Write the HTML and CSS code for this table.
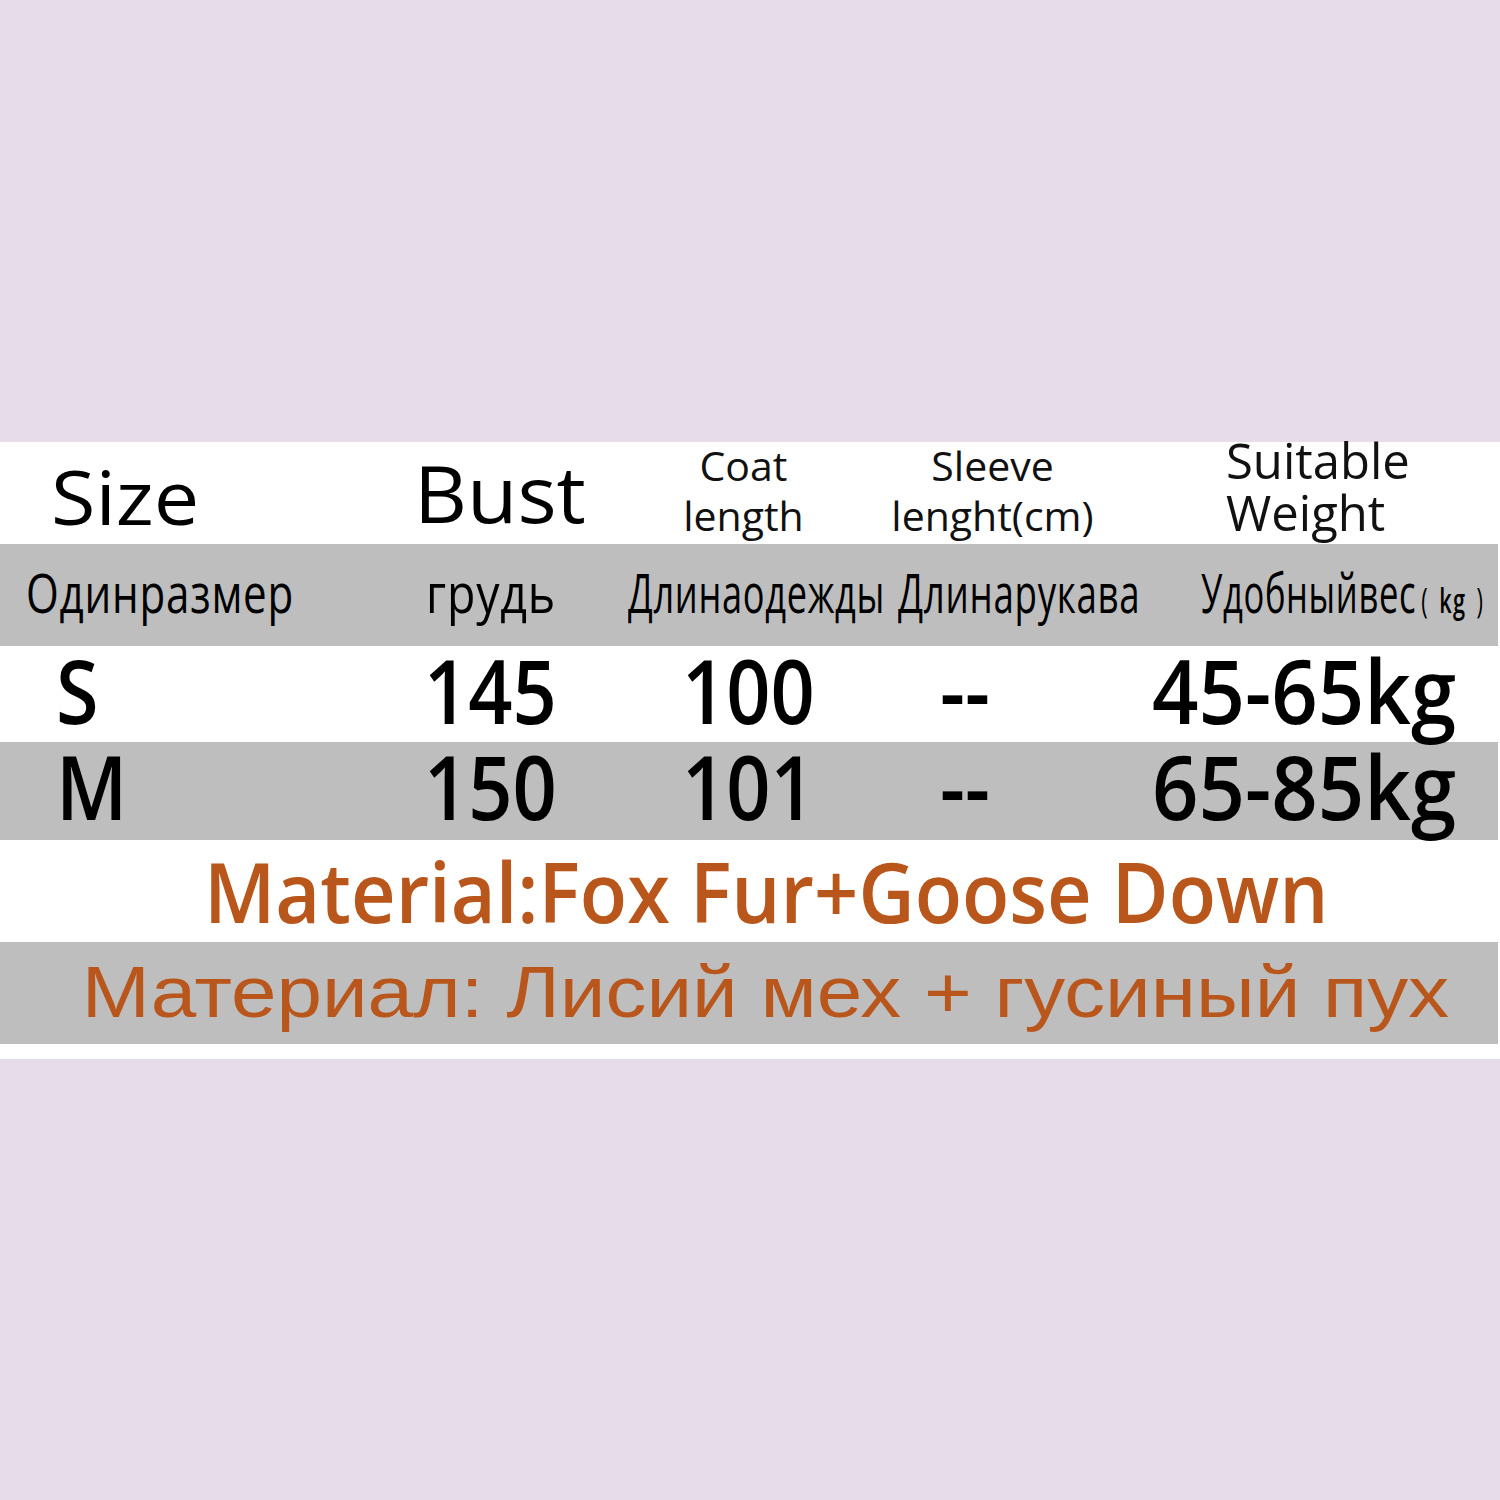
FILE: index.html
```html
<!DOCTYPE html>
<html lang="ru">
<head>
<meta charset="utf-8">
<title>Size chart</title>
<link rel="stylesheet" href="styles.css">
</head>
<body>
<div class="chart">
  <div class="row hdr">
    <div class="cell c1"><span class="big size">Size</span></div>
    <div class="cell c2"><span class="big bust">Bust</span></div>
    <div class="cell c3"><span class="two">Coat<br>length</span></div>
    <div class="cell c4"><span class="two">Sleeve<br>lenght(cm)</span></div>
    <div class="cell c5"><span class="two wt">Suitable<br>Weight</span></div>
  </div>
  <div class="row ru gray">
    <div class="cell c1"><span class="cond k1">Одинразмер</span></div>
    <div class="cell c2"><span class="cond k2">грудь</span></div>
    <div class="cell c3"><span class="cond k3">Длинаодежды</span></div>
    <div class="cell c4"><span class="cond k4">Длинарукава</span></div>
    <div class="cell c5"><span class="cond k5">Удобныйвес<small>(<b>kg</b>)</small></span></div>
  </div>
  <div class="row data">
    <div class="cell c1"><span class="num">S</span></div>
    <div class="cell c2"><span class="num">145</span></div>
    <div class="cell c3"><span class="num">100</span></div>
    <div class="cell c4"><span class="num">--</span></div>
    <div class="cell c5"><span class="num">45-65kg</span></div>
  </div>
  <div class="row data gray">
    <div class="cell c1"><span class="num">M</span></div>
    <div class="cell c2"><span class="num">150</span></div>
    <div class="cell c3"><span class="num">101</span></div>
    <div class="cell c4"><span class="num">--</span></div>
    <div class="cell c5"><span class="num">65-85kg</span></div>
  </div>
  <div class="row mat">
    <span class="mat-en">Material:Fox Fur+Goose Down</span>
  </div>
  <div class="row mat gray">
    <span class="mat-ru">Материал: Лисий мех + гусиный пух</span>
  </div>
  <div class="tail"></div>
</div>
</body>
</html>
```
FILE: styles.css
```css
html, body {
  margin: 0;
  padding: 0;
}
body {
  background: #e6dcea;
  min-height: 1500px;
  display: flex;
  flex-direction: column;
  justify-content: center;
  font-family: "Open Sans", "Noto Sans", sans-serif;
  color: #000;
}
.chart {
  background: #fff;
  width: 1500px;
  display: flex;
  flex-direction: column;
  overflow-x: clip;
}
.row {
  display: grid;
  grid-template-columns: 410px 210px 255px 265px minmax(0, 1fr);
  align-items: start;
}
.gray {
  background: #bebebe;
  margin-right: 2px;
}
.cell {
  white-space: nowrap;
  min-width: 0;
}

/* header row */
.hdr {
  height: 102px;
  position: relative;
  z-index: 0;
}
.big {
  display: block;
  line-height: 1;
  transform-origin: left top;
}
.size {
  font-size: 75px;
  padding-top: 17px;
  transform: scaleX(1.08);
}
.bust {
  font-size: 79px;
  padding-top: 11px;
  transform: scaleX(1.04);
}
.hdr .c1 { padding-left: 51px; }
.hdr .c2 { padding-left: 4px; }
.two {
  display: block;
  font-size: 41px;
  line-height: 50px;
  margin-top: -2px;
  color: #111;
}
.hdr .c3 { text-align: center; padding-right: 8px; }
.hdr .c4 { text-align: center; padding-right: 30px; }
.wt {
  font-size: 49px;
  line-height: 52px;
  margin-top: -8px;
  padding-left: 86px;
}

/* russian header row */
.ru {
  height: 102px;
  position: relative;
  z-index: 1;
}
.cond {
  display: inline-block;
  font-size: 54px;
  line-height: 1;
  padding-top: 21px;
  letter-spacing: 1px;
  transform-origin: left top;
}
.k1 { transform: scaleX(0.78); }
.k2 { transform: scaleX(0.86); }
.k3 { transform: scaleX(0.67); }
.k4 { transform: scaleX(0.68); }
.k5 { transform: scaleX(0.64); }
.cond small {
  font-size: 34px;
  letter-spacing: 0;
  margin-left: 8px;
}
.cond small b {
  font-weight: 600;
  letter-spacing: 2px;
  margin: 0 16px 0 18px;
}
.ru .c1 { padding-left: 26px; }
.ru .c2 { padding-left: 16px; }
.ru .c3 { padding-left: 8px; }
.ru .c4 { padding-left: 23px; }
.ru .c5 { padding-left: 61px; }

/* data rows */
.data {
  height: 96px;
}
.data.gray { height: 98px; }
.num {
  display: inline-block;
  font-size: 88px;
  line-height: 1;
  font-weight: 600;
  transform: scaleX(0.88);
  transform-origin: left top;
}
.data .c1 { padding-left: 56px; }
.data .c2 { padding-left: 14px; }
.data .c3 { padding-left: 62px; }
.data .c4 { padding-left: 65px; }
.data .c5 { padding-left: 12px; }
.data .c5 .num { transform: scaleX(0.925); }

/* material rows */
.mat {
  display: flex;
  justify-content: center;
  align-items: flex-start;
  height: 102px;
  color: #b9561b;
  white-space: nowrap;
}
.mat-en {
  display: inline-block;
  font-size: 84px;
  line-height: 1;
  font-weight: 600;
  padding-top: 9px;
  margin-left: 32px;
  transform: scaleX(0.923);
  transform-origin: center top;
}
.mat-ru {
  display: inline-block;
  font-family: "Liberation Sans", Arial, sans-serif;
  font-size: 73px;
  line-height: 1;
  padding-top: 13px;
  margin-left: 32px;
  transform: scaleX(1.12);
  transform-origin: center top;
}
.tail {
  height: 15px;
}
```
